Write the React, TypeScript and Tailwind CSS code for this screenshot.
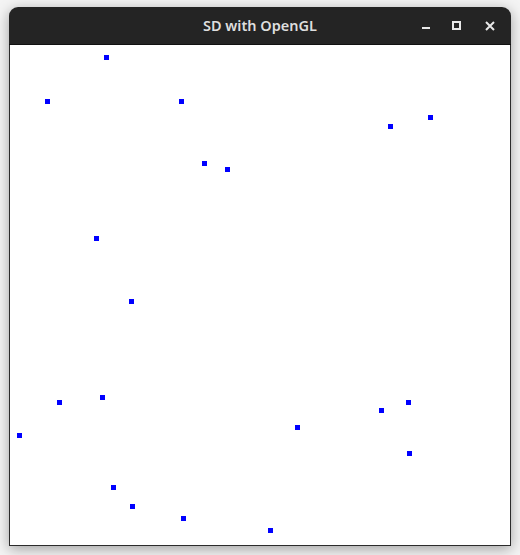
const points: [number, number][] = [
  [106, 57], [47, 101], [181, 101], [390, 126], [430, 117],
  [204, 163], [227, 169], [96, 238], [131, 301], [59, 402],
  [102, 397], [19, 435], [381, 410], [408, 402], [297, 427],
  [409, 453], [113, 487], [132, 506], [183, 518], [270, 530],
];

export default function App() {
  return (
    <div className="w-[520px] h-[555px] bg-[#f4f4f4] pt-[7px] pl-[9px] overflow-hidden">
      <div className="w-[502px] rounded-t-[9px] bg-[#242424] shadow-[0_3px_14px_rgba(0,0,0,0.35)]">
        <div className="relative h-[38px] flex items-center justify-center border-b border-[#111]">
          <span className="text-[14.5px] font-semibold text-[#dedede] font-['Noto_Sans',sans-serif] leading-none">
            SD with OpenGL
          </span>
          <div className="absolute right-0 top-0 h-full flex items-center">
            <svg width="100" height="37" viewBox="0 0 100 37" className="text-[#e8e8e8]">
              <rect x="11" y="20" width="8" height="2" fill="currentColor" />
              <rect x="42" y="15" width="7" height="7" fill="none" stroke="currentColor" strokeWidth="2" />
              <path d="M75 15 L83 23 M83 15 L75 23" stroke="currentColor" strokeWidth="2" />
            </svg>
          </div>
        </div>
        <div className="px-px pb-px bg-[#2b2b2b]">
          <svg width="500" height="500" viewBox="0 0 500 500" className="block bg-white">
            {points.map(([x, y], i) => (
              <rect key={i} x={x - 10 - 2} y={y - 45 - 2} width="5" height="5" fill="#0000ff" />
            ))}
          </svg>
        </div>
      </div>
    </div>
  );
}
